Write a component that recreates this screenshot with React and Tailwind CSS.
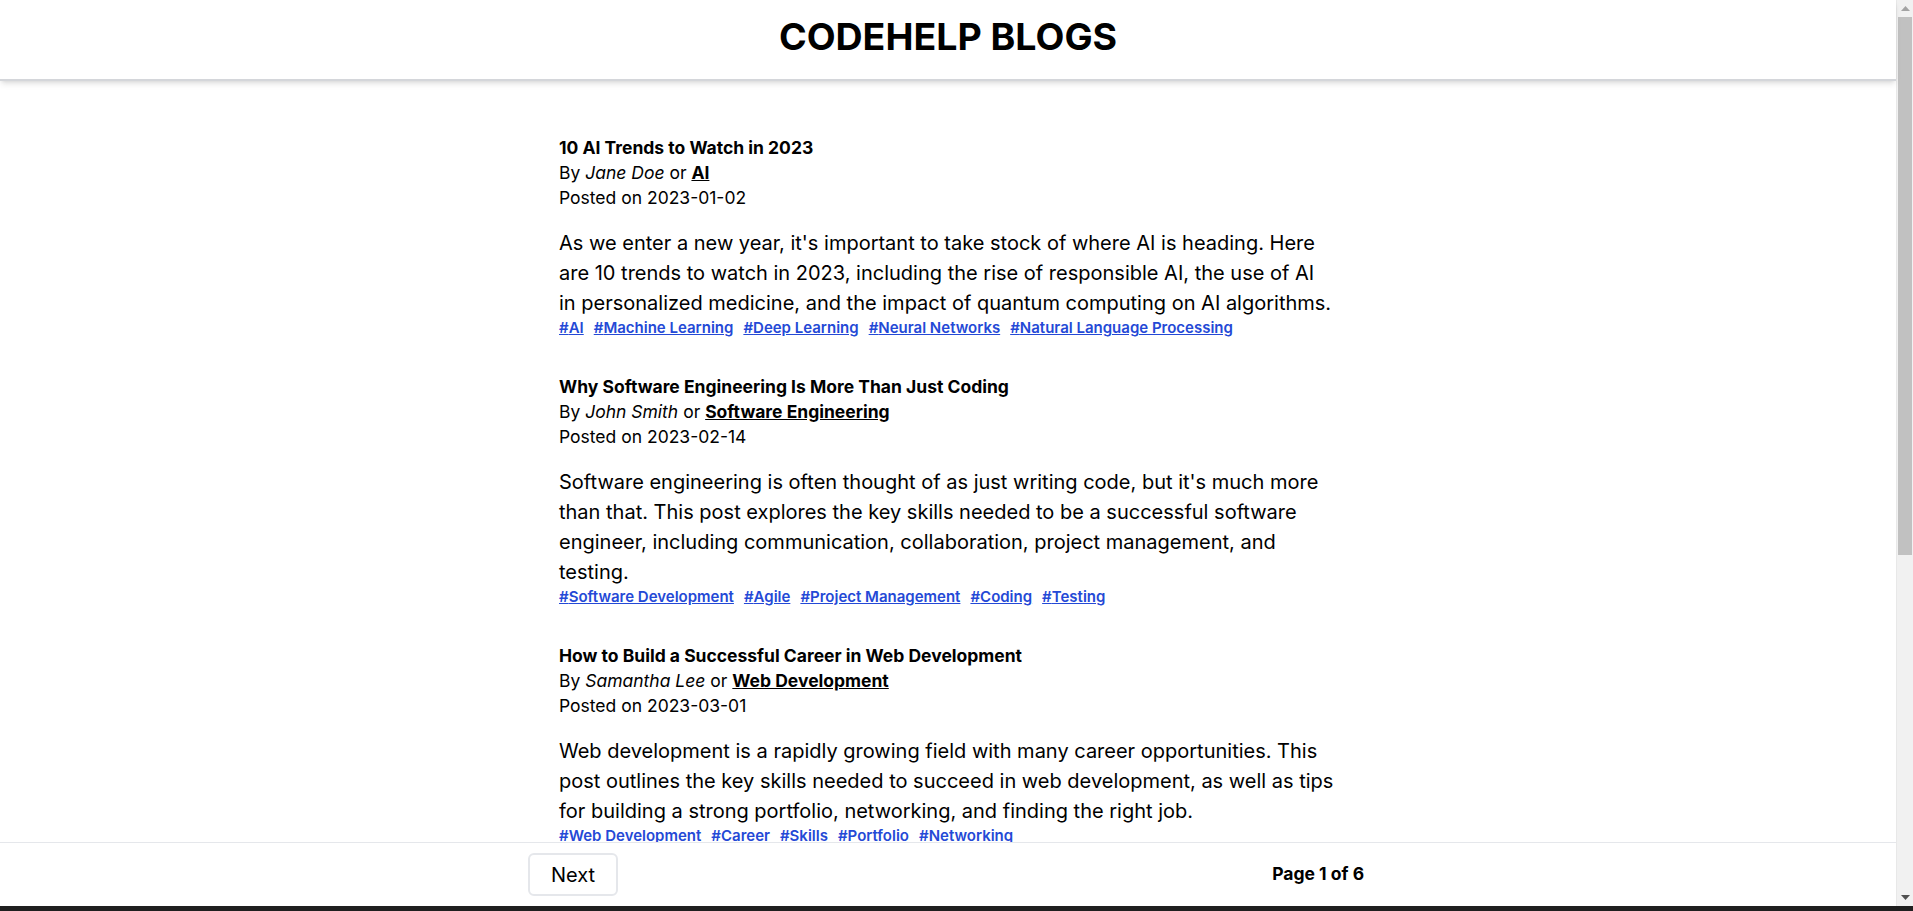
import { useState } from 'react';

const posts = [
  {
    id: 1,
    title: '10 AI Trends to Watch in 2023',
    author: 'Jane Doe',
    category: 'AI',
    date: '2023-01-02',
    content:
      "As we enter a new year, it's important to take stock of where AI is heading. Here are 10 trends to watch in 2023, including the rise of responsible AI, the use of AI in\u00A0personalized medicine, and the impact of quantum computing on AI algorithms.",
    tags: ['AI', 'Machine Learning', 'Deep Learning', 'Neural Networks', 'Natural Language Processing'],
  },
  {
    id: 2,
    title: 'Why Software Engineering Is More Than Just Coding',
    author: 'John Smith',
    category: 'Software Engineering',
    date: '2023-02-14',
    content:
      "Software engineering is often thought of as just writing code, but it's much more than that. This post explores the key skills needed to be a successful software engineer, including communication, collaboration, project management, and testing.",
    tags: ['Software Development', 'Agile', 'Project Management', 'Coding', 'Testing'],
  },
  {
    id: 3,
    title: 'How to Build a Successful Career in Web Development',
    author: 'Samantha Lee',
    category: 'Web Development',
    date: '2023-03-01',
    content:
      'Web development is a rapidly growing field with many career opportunities. This post outlines the key skills needed to succeed in web development, as well as tips for building a strong portfolio, networking, and finding the right job.',
    tags: ['Web Development', 'Career', 'Skills', 'Portfolio', 'Networking'],
  },
];

function BlogPost({ post }) {
  return (
    <div>
      <p className="font-bold text-[17.5px] leading-[25px]">{post.title}</p>
      <p className="text-[17.5px] leading-[25px]">
        By <span className="italic">{post.author}</span> or{' '}
        <span className="font-bold underline">{post.category}</span>
      </p>
      <p className="text-[17.5px] leading-[25px]">Posted on {post.date}</p>
      <p className="mt-[18px] text-[20px] leading-[30px]">{post.content}</p>
      <div className="flex flex-wrap gap-x-[10px]">
        {post.tags.map((tag) => (
          <span key={tag} className="text-[15px] leading-[20px] font-semibold text-[#2449d6] underline">
            #{tag}
          </span>
        ))}
      </div>
    </div>
  );
}

export default function App() {
  const [page, setPage] = useState(1);

  return (
    <div className="h-[911px] flex flex-col bg-white overflow-hidden text-black font-['Inter',sans-serif]">
      <div className="flex flex-1 min-h-0">
        <div className="flex-1 flex flex-col min-w-0">
          <header className="h-[81px] shrink-0 flex items-center justify-center bg-white border-b-2 border-[#d4d6da] shadow-md relative z-10">
            <h1 className="text-[37.5px] font-bold pb-[4px]">CODEHELP BLOGS</h1>
          </header>

          <main className="flex-1 min-h-0 overflow-hidden">
            <div className="w-[778px] mx-auto pt-[54px] flex flex-col gap-y-[36px]">
              {posts.map((post) => (
                <BlogPost key={post.id} post={post} />
              ))}
            </div>
          </main>

          <footer className="h-[64px] shrink-0 border-t border-gray-200 bg-white flex items-center justify-center pr-[4px]">
            <div className="w-[836px] flex items-center justify-between">
              <button
                onClick={() => setPage(page + 1)}
                className="h-[43px] px-[21px] border-2 border-gray-200 rounded-md text-[20px]"
              >
                Next
              </button>
              <p className="font-bold text-[17.5px]">Page {page} of 6</p>
            </div>
          </footer>
        </div>

        {/* scrollbar */}
        <div className="w-[17px] shrink-0 bg-[#f1f1f1] border-l border-[#e8e8e8] flex flex-col items-center">
          <div className="h-[17px] flex items-center justify-center">
            <svg width="9" height="5" viewBox="0 0 9 5"><path d="M4.5 0 9 5H0z" fill="#a3a3a3" /></svg>
          </div>
          <div className="w-[14px] h-[538px] bg-[#c1c1c1]" />
          <div className="flex-1" />
          <div className="h-[17px] flex items-center justify-center">
            <svg width="9" height="5" viewBox="0 0 9 5"><path d="M0 0h9L4.5 5z" fill="#505050" /></svg>
          </div>
        </div>
      </div>
      <div className="h-[5px] shrink-0 bg-[#1f1f1f]" />
    </div>
  );
}
